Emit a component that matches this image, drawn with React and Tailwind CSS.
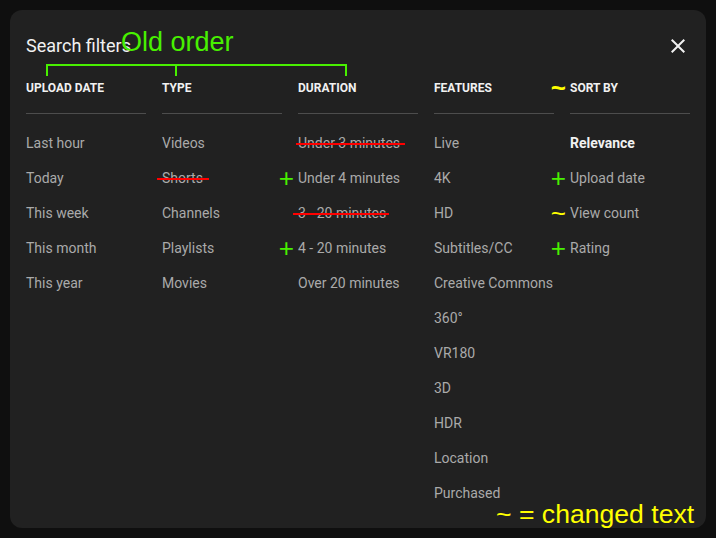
import React from "react";

const GREEN = "text-[#48f000]";

const columns = [
  {
    title: "Upload date",
    items: [
      { label: "Last hour" },
      { label: "Today" },
      { label: "This week" },
      { label: "This month" },
      { label: "This year" },
    ],
  },
  {
    title: "Type",
    items: [
      { label: "Videos" },
      { label: "Shorts", strike: "left-[-5px] right-[-6px]" },
      { label: "Channels" },
      { label: "Playlists" },
      { label: "Movies" },
    ],
  },
  {
    title: "Duration",
    items: [
      { label: "Under 3 minutes", strike: "left-[-2px] right-[-5px]" },
      { label: "Under 4 minutes", mark: "+" },
      { label: "3 - 20 minutes", strike: "left-[-5px] right-[-3px]" },
      { label: "4 - 20 minutes", mark: "+" },
      { label: "Over 20 minutes" },
    ],
  },
  {
    title: "Features",
    items: [
      { label: "Live" },
      { label: "4K" },
      { label: "HD" },
      { label: "Subtitles/CC" },
      { label: "Creative Commons" },
      { label: "360°" },
      { label: "VR180" },
      { label: "3D" },
      { label: "HDR" },
      { label: "Location" },
      { label: "Purchased" },
    ],
  },
  {
    title: "Sort by",
    mark: "~",
    items: [
      { label: "Relevance", active: true },
      { label: "Upload date", mark: "+" },
      { label: "View count", mark: "~" },
      { label: "Rating", mark: "+" },
    ],
  },
];

const Mark = ({ char }) => (
  <span
    className={`absolute right-full top-1/2 mr-[4px] h-[26px] -translate-y-1/2 whitespace-pre font-['Liberation_Sans',Arial,sans-serif] text-[26px] leading-none ${
      char === "+" ? GREEN : "text-[#ffff00]"
    }`}
  >
    {char}
  </span>
);

const App = () => {
  return (
    <div className="h-[538px] w-full overflow-hidden bg-[#0f0f0f] p-[10px] font-['Roboto',Arial,sans-serif]">
      <div className="relative h-[518px] w-[696px] rounded-xl bg-[#212121] px-4 pt-4">
        <div className="flex h-10 items-center justify-between">
          <h2 className="text-[18px] leading-6 text-[#f1f1f1]">Search filters</h2>
          <button className="flex h-6 w-6 items-center justify-center text-[#f1f1f1]">
            <svg viewBox="0 0 24 24" className="h-6 w-6" fill="currentColor">
              <path d="M19 6.41 17.59 5 12 10.59 6.41 5 5 6.41 10.59 12 5 17.59 6.41 19 12 13.41 17.59 19 19 17.59 13.41 12z" />
            </svg>
          </button>
        </div>

        <div className="mt-[14px] grid grid-cols-5 gap-x-4">
          {columns.map((col) => (
            <div key={col.title}>
              <div className="h-[34px] border-b border-[#4d4d4d] text-[12px] leading-4">
                <span className="relative font-bold uppercase text-[#f1f1f1]">
                  {col.mark && <Mark char={col.mark} />}
                  {col.title}
                </span>
              </div>
              <ul className="mt-[11px]">
                {col.items.map((item) => (
                  <li key={item.label} className="relative flex h-[35px] items-center">
                    {item.mark && <Mark char={item.mark} />}
                    <span
                      className={`relative whitespace-nowrap text-[14px] leading-5 ${
                        item.active ? "font-bold text-[#f1f1f1]" : "text-[#aaaaaa]"
                      }`}
                    >
                      {item.label}
                      {item.strike && (
                        <span
                          className={`absolute top-1/2 h-[2px] bg-[#ff0000] ${item.strike}`}
                        />
                      )}
                    </span>
                  </li>
                ))}
              </ul>
            </div>
          ))}
        </div>

        {/* annotation overlay */}
        <span
          className={`absolute left-[111px] top-[19px] whitespace-nowrap font-['Liberation_Sans',Arial,sans-serif] text-[27px] leading-none ${GREEN}`}
        >
          Old order
        </span>
        <div className="absolute left-[36px] top-[54px] h-[12px] w-[301px] border-x-2 border-t-2 border-[#48f000]">
          <div className="ml-[127px] h-[10px] w-[2px] bg-[#48f000]" />
        </div>
        <span className="absolute left-[486px] top-[491px] whitespace-nowrap font-['Liberation_Sans',Arial,sans-serif] text-[26.6px] leading-none text-[#ffff00]">
          ~ = changed text
        </span>
      </div>
    </div>
  );
};

export default App;
